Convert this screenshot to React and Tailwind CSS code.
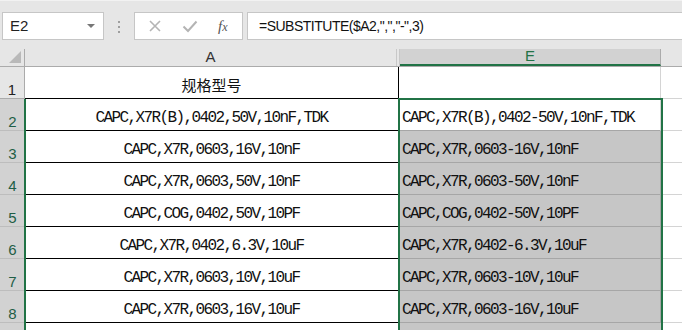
const ROWS = [
  ["CAPC,X7R(B),0402,50V,10nF,TDK", "CAPC,X7R(B),0402-50V,10nF,TDK"],
  ["CAPC,X7R,0603,16V,10nF", "CAPC,X7R,0603-16V,10nF"],
  ["CAPC,X7R,0603,50V,10nF", "CAPC,X7R,0603-50V,10nF"],
  ["CAPC,COG,0402,50V,10PF", "CAPC,COG,0402-50V,10PF"],
  ["CAPC,X7R,0402,6.3V,10uF", "CAPC,X7R,0402-6.3V,10uF"],
  ["CAPC,X7R,0603,10V,10uF", "CAPC,X7R,0603-10V,10uF"],
  ["CAPC,X7R,0603,16V,10uF", "CAPC,X7R,0603-16V,10uF"],
];

const MONO = { fontFamily: '"Liberation Mono", "Noto Sans CJK SC", monospace' };
const SANS = { fontFamily: '"Liberation Sans", Arial, sans-serif' };

function RowHeader({ n, selected }) {
  return (
    <div
      className={`w-[25px] shrink-0 h-full flex items-end justify-center pb-[1px] text-[15px] leading-none border-b ${
        selected
          ? "bg-[#d2d2d2] text-[#1f5e46] border-[#bdbdbd]"
          : "bg-[#e6e6e6] text-[#222] border-[#ababab] border-r border-r-[#ababab]"
      }`}
      style={SANS}
    >
      {n}
    </div>
  );
}

export default function App() {
  return (
    <div className="relative w-[682px] h-[330px] overflow-hidden bg-white">
      {/* ========== formula bar ========== */}
      <div className="h-[49px] bg-[#e6e6e6] flex items-start pt-[11px] border-t border-[#f2f2f2]">
        <div
          className="ml-[2px] w-[102px] h-[28px] bg-white border border-[#c6c6c6] flex items-center pl-[7px] pr-[8px] text-[15px] text-[#222]"
          style={SANS}
        >
          <span className="flex-1">E2</span>
          <span className="w-0 h-0 border-l-[4px] border-r-[4px] border-t-[4px] border-l-transparent border-r-transparent border-t-[#777]" />
        </div>
        <div className="w-[30px] flex flex-col items-center gap-[3px] pt-[9px]">
          <span className="w-[2px] h-[2px] bg-[#9e9e9e]" />
          <span className="w-[2px] h-[2px] bg-[#9e9e9e]" />
          <span className="w-[2px] h-[2px] bg-[#9e9e9e]" />
        </div>
        <div className="w-[109px] h-[28px] bg-white border border-[#c6c6c6] flex items-center">
          <svg width="14" height="14" viewBox="0 0 14 14" className="ml-[13px]">
            <path d="M2 2 L12 12 M12 2 L2 12" stroke="#b4b4b4" strokeWidth="1.6" fill="none" />
          </svg>
          <svg width="16" height="14" viewBox="0 0 16 14" className="ml-[20px]">
            <path d="M1.5 7.5 L6 12 L14.5 2.5" stroke="#b4b4b4" strokeWidth="2" fill="none" />
          </svg>
          <span
            className="ml-[20px] text-[15px] italic text-[#555] leading-none"
            style={{ fontFamily: '"Liberation Serif", serif' }}
          >
            f<span className="text-[12px]">x</span>
          </span>
        </div>
        <div
          className="ml-[4px] flex-1 h-[28px] bg-white border border-[#c6c6c6] border-r-0 flex items-center pl-[11px] text-[14px] tracking-[-0.5px] text-[#111]"
          style={SANS}
        >
          =SUBSTITUTE($A2,",","-",3)
        </div>
      </div>

      {/* ========== column header ========== */}
      <div className="flex h-[18px] bg-[#e6e6e6] border-b border-[#ababab]" style={SANS}>
        <div className="w-[25px] shrink-0 border-r border-[#ababab] flex items-end justify-end pr-[3px] pb-[3px]">
          <span
            className="w-0 h-0"
            style={{ borderBottom: "12px solid #b9b9b9", borderLeft: "12px solid transparent" }}
          />
        </div>
        <div className="w-[372px] shrink-0 flex items-center justify-center text-[15px] text-[#333] border-r border-[#c8c8c8]">
          A
        </div>
        <div className="w-[3px] shrink-0 border-r border-[#c8c8c8]" />
        <div className="w-[261px] shrink-0 bg-[#d2d2d2] flex items-center justify-center text-[15px] text-[#217346] border-b-2 border-[#217346] border-r border-r-[#ababab]">
          E
        </div>
        <div className="flex-1" />
      </div>

      {/* ========== row 1 ========== */}
      <div className="flex h-[32px]">
        <RowHeader n={1} />
        <div
          className="w-[374px] shrink-0 border-b border-r border-black flex items-end justify-center pb-[2px] text-[15px] text-[#111]"
          style={{ fontFamily: '"Noto Sans CJK SC", sans-serif' }}
        >
          规格型号
        </div>
        <div className="w-[262px] shrink-0 border-r border-[#d4d4d4]" />
        <div className="flex-1 border-b border-[#d4d4d4]" />
      </div>

      {/* ========== data rows ========== */}
      {ROWS.map(([a, e], i) => (
        <div key={i} className="flex h-[32px]">
          <RowHeader n={i + 2} selected />
          <div
            className="w-[374px] shrink-0 border-b border-r border-black flex items-end justify-center pb-0 text-[16px] tracking-[-1.6px] text-[#111] whitespace-pre"
            style={MONO}
          >
            {a}
          </div>
          <div
            className={`w-[262px] shrink-0 border-b border-r flex items-end pl-[3px] pb-0 text-[16px] tracking-[-1.6px] text-[#111] whitespace-pre ${
              i === 0 ? "bg-white border-b-[#a6a6a6] border-r-[#d4d4d4]" : "bg-[#c6c6c6] border-[#a6a6a6]"
            }`}
            style={MONO}
          >
            {e}
          </div>
          <div className="flex-1 border-b border-[#d4d4d4]" />
        </div>
      ))}

      {/* row 9, only its top shows */}
      <div className="flex h-[32px]">
        <div className="w-[25px] shrink-0 h-full bg-[#d2d2d2]" />
        <div className="w-[374px] shrink-0 border-r border-black" />
        <div className="w-[262px] shrink-0 bg-[#c6c6c6]" />
        <div className="flex-1" />
      </div>

      {/* selection outline + row header marker */}
      <div className="absolute left-[398px] top-[98px] w-[265px] h-[260px] border-2 border-[#217346] pointer-events-none" />
      <div className="absolute left-[24px] top-[99px] w-[2px] h-[240px] bg-[#217346] pointer-events-none" />
    </div>
  );
}
